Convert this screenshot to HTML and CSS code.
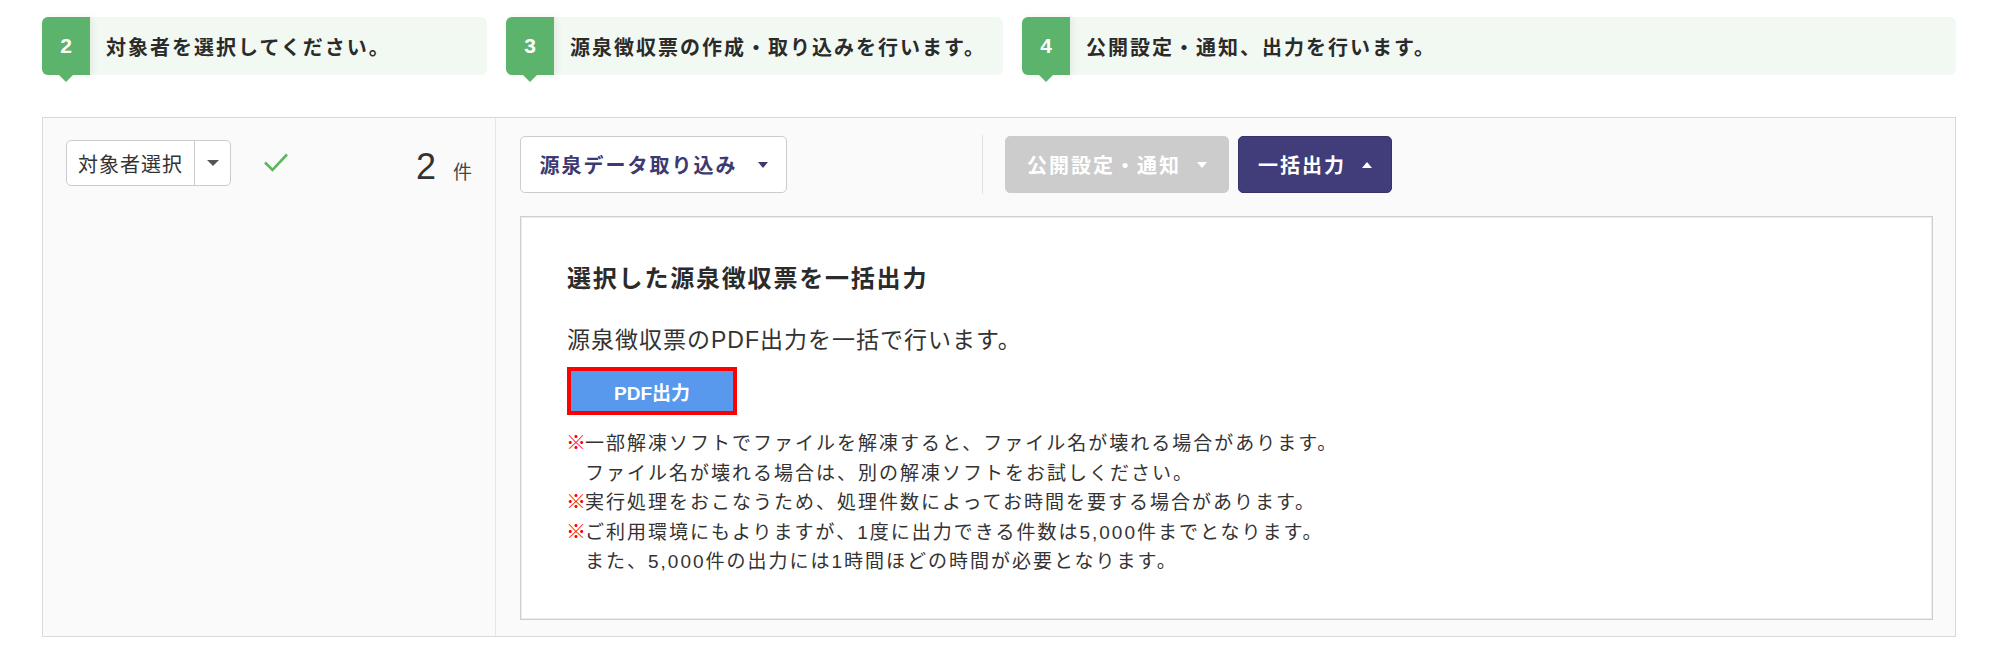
FILE: index.html
```html
<!DOCTYPE html>
<html lang="ja">
<head>
<meta charset="utf-8">
<title>源泉徴収票</title>
<link rel="stylesheet" href="styles.css">
</head>
<body>
<div class="page">
  <div class="steps">
    <div class="step step-2">
      <div class="step-num">2</div>
      <div class="step-text">対象者を選択してください。</div>
    </div>
    <div class="step step-3">
      <div class="step-num">3</div>
      <div class="step-text">源泉徴収票の作成・取り込みを行います。</div>
    </div>
    <div class="step step-4">
      <div class="step-num">4</div>
      <div class="step-text">公開設定・通知、出力を行います。</div>
    </div>
  </div>

  <div class="panel">
    <div class="col-left">
      <div class="select">
        <span class="select-label">対象者選択</span>
        <span class="select-caret"><span class="tri-down dark"></span></span>
      </div>
      <svg class="check" width="26" height="20" viewBox="0 0 26 20"><path d="M2 10.5 L9.5 18 L24 2.5" fill="none" stroke="#5cb85c" stroke-width="2.6"/></svg>
      <div class="count"><span class="count-num">2</span><span class="count-unit">件</span></div>
    </div>
    <div class="col-right">
      <div class="toolbar">
        <div class="tool-group import">
          <button class="btn btn-white">源泉データ取り込み<span class="tri-down navy"></span></button>
        </div>
        <div class="tool-group publish">
          <button class="btn btn-gray">公開設定・通知<span class="tri-down white"></span></button>
          <button class="btn btn-navy">一括出力<span class="tri-up white"></span></button>
        </div>
      </div>
      <div class="output-box">
        <h2 class="out-title">選択した源泉徴収票を一括出力</h2>
        <p class="out-desc">源泉徴収票のPDF出力を一括で行います。</p>
        <div class="pdf-wrap"><button class="btn-pdf">PDF出力</button></div>
        <ul class="notes">
          <li><span class="mark">※</span><span>一部解凍ソフトでファイルを解凍すると、ファイル名が壊れる場合があります。<br>ファイル名が壊れる場合は、別の解凍ソフトをお試しください。</span></li>
          <li><span class="mark">※</span><span>実行処理をおこなうため、処理件数によってお時間を要する場合があります。</span></li>
          <li><span class="mark">※</span><span>ご利用環境にもよりますが、1度に出力できる件数は5,000件までとなります。<br>また、5,000件の出力には1時間ほどの時間が必要となります。</span></li>
        </ul>
      </div>
    </div>
  </div>
</div>
</body>
</html>
```

FILE: styles.css
```css
* { box-sizing: border-box; }
html, body { margin: 0; padding: 0; background: #fff; }
body {
  font-family: "Liberation Sans", "Noto Sans CJK JP", sans-serif;
  color: #333;
}
.page { padding: 17px 44px 0 42px; width: 2000px; }

/* steps */
.steps { display: flex; gap: 19px; height: 58px; }
.step {
  display: flex; align-items: center;
  background: #f2f9f2; border-radius: 6px;
  position: relative;
}
.step-2 { width: 445px; }
.step-3 { width: 497px; }
.step-4 { flex: 1; }
.step-num {
  width: 48px; height: 100%;
  background: #5cb46c; color: #fff;
  border-radius: 6px 0 0 6px;
  display: flex; align-items: center; justify-content: center;
  font-weight: bold; font-size: 21px;
  position: relative;
  box-shadow: 3px 0 6px rgba(0,0,0,0.06);
}
.step-num::after {
  content: ""; position: absolute; left: 17px; top: 100%;
  border-left: 7px solid transparent; border-right: 7px solid transparent;
  border-top: 7px solid #5cb46c;
}
.step-text {
  margin-left: 16px; font-size: 20px; font-weight: bold; letter-spacing: 2px;
  color: #2b2b2b; white-space: nowrap;
}

/* panel */
.panel {
  margin-top: 42px;
  display: flex;
  border: 1px solid #d9d9d9;
  background: #fafafa;
  height: 520px;
}
.col-left {
  width: 453px;
  border-right: 1px solid #e6e6e6;
  padding: 22px 23px 0 23px;
  display: flex; align-items: flex-start;
}
.select {
  display: flex; height: 46px; width: 165px;
  border: 1px solid #ccc; border-radius: 5px; background: #fff;
}
.select-label {
  flex: 1; display: flex; align-items: center; justify-content: center;
  font-size: 20px; letter-spacing: 1px; color: #333; white-space: nowrap;
  border-right: 1px solid #ccc;
}
.select-caret { width: 35px; display: flex; align-items: center; justify-content: center; }
.check { margin: 12px 0 0 32px; }
.count { margin-left: auto; display: flex; align-items: baseline; margin-top: 6px; }
.count-num { font-size: 36px; color: #333; }
.count-unit { font-size: 19px; margin-left: 17px; color: #444; }

.tri-down, .tri-up { display: inline-block; width: 0; height: 0; border-left: 5px solid transparent; border-right: 5px solid transparent; }
.tri-down { border-top: 6px solid; }
.tri-up { border-bottom: 6px solid; }
.tri-down.dark { border-top-color: #555; border-left-width: 6px; border-right-width: 6px; }
.tri-down.navy { border-top-color: #3c3a70; margin-left: 20px; }
.tri-down.white { border-top-color: #fff; margin-left: 16px; }
.tri-up.white { border-bottom-color: #fff; margin-left: 16px; }

.col-right { flex: 1; padding: 17px 22px 16px 24px; display: flex; flex-direction: column; }
.toolbar { display: flex; align-items: center; }
.tool-group { display: flex; gap: 9px; }
.tool-group.import { width: 463px; border-right: 1px solid #e3e3e3; height: 59px; align-items: center; }
.tool-group.publish { padding-left: 22px; }
.btn {
  height: 57px; border-radius: 5px;
  font-family: "Liberation Sans", "Noto Sans CJK JP", sans-serif;
  font-size: 20px; font-weight: bold; letter-spacing: 2px;
  display: inline-flex; align-items: center; justify-content: center;
  padding: 0; cursor: pointer; white-space: nowrap;
}
.btn-white { width: 267px; background: #fff; border: 1px solid #ccc; color: #3c3a70; }
.btn-gray { width: 224px; background: #cccccc; border: 1px solid #cccccc; color: #fff; }
.btn-navy { width: 154px; background: #403d7a; border: 1px solid #35336a; color: #fff; }

.output-box {
  margin-top: 22px; flex: 1;
  background: #fff; border: 1px solid #cfcfcf;
  box-shadow: inset 0 0 0 1px #ececec;
  padding: 47px 46px 0 46px;
}
.out-title { margin: 0; font-size: 24px; font-weight: bold; letter-spacing: 1.8px; color: #2b2b2b; line-height: 30px; }
.out-desc { margin: 30px 0 0 0; font-size: 23px; letter-spacing: 1px; color: #333; line-height: 32px; }
.pdf-wrap { margin-top: 11px; }
.btn-pdf {
  width: 170px; height: 48px;
  background: #5899ee; color: #fff;
  border: 4px solid #f00;
  font-family: "Liberation Sans", "Noto Sans CJK JP", sans-serif;
  font-size: 19px; font-weight: bold; cursor: pointer;
}
.notes { list-style: none; margin: 14px 0 0 0; padding: 0; font-size: 19px; line-height: 29.5px; letter-spacing: 2px; color: #333; }
.notes li { display: flex; }
.mark { color: #f00; width: 19px; flex: none; font-weight: bold; letter-spacing: 0; font-size: 20px; margin-left: -1px; }
```
